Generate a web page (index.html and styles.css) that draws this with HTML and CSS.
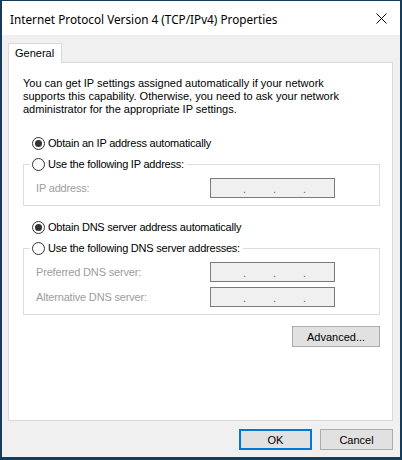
FILE: index.html
```html
<!DOCTYPE html>
<html lang="en">
<head>
<meta charset="utf-8">
<title>Internet Protocol Version 4 (TCP/IPv4) Properties</title>
<link rel="stylesheet" href="styles.css">
</head>
<body>
<div class="window">
  <div class="titlebar">
    <span class="title">Internet Protocol Version 4 (TCP/IPv4) Properties</span>
    <svg class="close" width="11" height="11" viewBox="0 0 11 11" aria-hidden="true">
      <path d="M0.5 0.5 L10.5 10.5 M10.5 0.5 L0.5 10.5" stroke="#000" stroke-width="1" fill="none"/>
    </svg>
  </div>
  <div class="body">
    <div class="tabs"><div class="tab">General</div></div>
    <div class="panel">
      <p class="desc">You can get IP settings assigned automatically if your network<br>supports this capability. Otherwise, you need to ask your network<br>administrator for the appropriate IP settings.</p>

      <div class="option first"><span class="radio checked"></span><span>Obtain an IP address automatically</span></div>
      <fieldset class="group">
        <legend class="option"><span class="radio"></span><span>Use the following IP address:</span></legend>
        <div class="field"><span class="flabel">IP address:</span><span class="ipbox"><i>.</i><i>.</i><i>.</i></span></div>
      </fieldset>

      <div class="option second"><span class="radio checked"></span><span>Obtain DNS server address automatically</span></div>
      <fieldset class="group">
        <legend class="option"><span class="radio"></span><span>Use the following DNS server addresses:</span></legend>
        <div class="field"><span class="flabel">Preferred DNS server:</span><span class="ipbox"><i>.</i><i>.</i><i>.</i></span></div>
        <div class="field"><span class="flabel">Alternative DNS server:</span><span class="ipbox"><i>.</i><i>.</i><i>.</i></span></div>
      </fieldset>

      <div class="adv-row"><button class="btn adv">Advanced...</button></div>
    </div>
    <div class="footer">
      <button class="btn ok">OK</button>
      <button class="btn">Cancel</button>
    </div>
  </div>
</div>
</body>
</html>
```

FILE: styles.css
```css
* { box-sizing: border-box; }
html, body { margin: 0; padding: 0; }
html { background: #173a59; }
body {
  width: 402px;
  height: 460px;
  padding: 1px 2px 3px 2px;
  font-family: "Liberation Sans", Arial, sans-serif;
  font-size: 11px;
  color: #000;
}
.window {
  width: 398px;
  height: 456px;
  background: #f0f0f0;
  display: flex;
  flex-direction: column;
}
.titlebar {
  height: 34px;
  background: #fff;
  display: flex;
  align-items: center;
  justify-content: space-between;
  padding: 0 13px 0 8px;
}
.title {
  font-family: "Noto Sans", "Open Sans", sans-serif;
  font-size: 11.75px;
  line-height: 16px;
  margin-top: 1px;
}
.close { display: block; margin-top: 1px; }
.body {
  flex: 1;
  display: flex;
  flex-direction: column;
  padding: 8px 7px 7px 6px;
}
.tabs { display: flex; }
.tab {
  position: relative;
  z-index: 1;
  height: 20px;
  margin-bottom: -1px;
  padding: 0 7px 0 6px;
  background: #fff;
  border: 1px solid #d9d9d9;
  border-bottom: none;
  line-height: 18px;
  font-size: 11px;
}
.panel {
  flex: 1;
  background: #fff;
  border: 1px solid #d9d9d9;
  padding: 14px 12px 0 14px;
}
.desc {
  margin: 0;
  line-height: 13px;
  white-space: nowrap;
}
.option {
  display: flex;
  align-items: center;
  height: 16px;
  line-height: 16px;
  white-space: nowrap;
  letter-spacing: -0.22px;
}
.option.first { margin-top: 19px; padding-left: 9px; }
.option.second { margin-top: 13px; padding-left: 9px; }
.radio {
  position: relative;
  width: 13px;
  height: 13px;
  border: 1px solid #333;
  border-radius: 50%;
  background: #fff;
  margin-right: 3px;
  flex: none;
}
.radio.checked::after {
  content: "";
  position: absolute;
  left: 2px;
  top: 2px;
  width: 7px;
  height: 7px;
  border-radius: 50%;
  background: #333;
}
.group {
  margin: 5px 0 0 0;
  min-width: 0;
  border: 1px solid #dcdcdc;
  padding: 0 0 7px 12px;
}
.group legend {
  margin-left: -6px;
  padding: 0 3px 0 2px;
}
.field {
  display: flex;
  align-items: center;
  height: 20px;
  margin-top: 6px;
}
.field + .field { margin-top: 5px; }
.flabel {
  width: 174px;
  color: #9d9d9d;
  letter-spacing: -0.18px;
}
.ipbox {
  width: 125px;
  height: 20px;
  border: 1px solid #7a7a7a;
  background: #f0f0f0;
  display: flex;
  align-items: flex-end;
  gap: 27px;
  padding: 0 0 2px 32px;
  color: #6d6d6d;
  line-height: 12px;
}
.ipbox i { font-style: normal; width: 3px; }
.adv-row {
  display: flex;
  justify-content: flex-end;
  margin-top: 11px;
}
.btn {
  font-family: "Liberation Sans", Arial, sans-serif;
  font-size: 11px;
  color: #000;
  background: #e1e1e1;
  border: 1px solid #adadad;
  height: 21px;
  width: 73px;
  padding: 0;
  margin: 0;
}
.btn.adv { width: 88px; }
.btn.ok { border: 2px solid #0078d7; }
.footer {
  display: flex;
  justify-content: flex-end;
  gap: 8px;
  margin-top: 8px;
}
```
